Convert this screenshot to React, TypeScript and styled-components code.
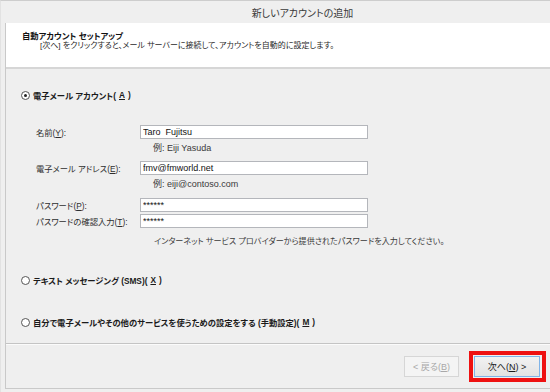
import React from 'react';
import styled, { createGlobalStyle } from 'styled-components';

const GlobalStyle = createGlobalStyle`
  html, body {
    margin: 0;
    padding: 0;
    background: #efefef;
  }
  body {
    font-family: "Liberation Sans", "Noto Sans CJK JP", sans-serif;
    font-feature-settings: "palt";
    font-size: 8.3px;
    color: #1e1e1e;
  }
`;

// ウィンドウ全体
const Window = styled.div`
  width: 550px;
  height: 392px;
  box-sizing: border-box;
  background: #efefef;
  border-top: 1px solid #cdcdcd;
  border-left: 1px solid #e2e2e2;
  display: flex;
  flex-direction: column;
  overflow: hidden;
`;

const TitleBar = styled.div`
  height: 22px;
  flex-shrink: 0;
  display: flex;
  align-items: center;
  justify-content: center;
  padding-left: 54px;
  font-size: 10px;
  color: #3a3a3a;
`;

const Panel = styled.div`
  margin-left: 4px;
  height: 365px;
  border-left: 1px solid #c9c9c9;
  border-bottom: 1px solid #c9c9c9;
  display: flex;
  flex-direction: column;
`;

// 上部の白いヘッダー
const Header = styled.div`
  height: 46px;
  flex-shrink: 0;
  box-sizing: border-box;
  background: #ffffff;
  border-bottom: 2px solid #d6d6d6;
  padding: 9px 0 0 16px;
`;

const HeaderTitle = styled.div`
  font-weight: bold;
  line-height: 9px;
  color: #111;
`;

const HeaderText = styled.div`
  font-size: 8px;
  line-height: 10px;
  padding-left: 18px;
  color: #2a2a2a;
`;

const Content = styled.div`
  flex: 1;
  display: flex;
  flex-direction: column;
  padding: 19px 0 0 15px;
  border-bottom: 1px solid #c4c4c4;
`;

const RadioRow = styled.label<{ $top?: number }>`
  display: flex;
  align-items: center;
  gap: 3px;
  height: 14px;
  margin-top: ${p => p.$top ?? 0}px;
  font-weight: bold;
  color: #1a1a1a;
`;

const RadioCircle = styled.span<{ $checked?: boolean }>`
  width: 7px;
  height: 7px;
  border-radius: 50%;
  border: 1px solid #555;
  background: #fff;
  display: flex;
  align-items: center;
  justify-content: center;

  &::after {
    content: '';
    width: 3px;
    height: 3px;
    border-radius: 50%;
    background: ${p => (p.$checked ? '#222' : 'transparent')};
  }
`;

const Form = styled.div`
  display: flex;
  flex-direction: column;
  padding-left: 15px;
  margin-top: 23px;
`;

const FieldRow = styled.div<{ $top?: number }>`
  display: grid;
  grid-template-columns: 104px 228px;
  align-items: center;
  height: 14px;
  margin-top: ${p => p.$top ?? 0}px;
`;

const FieldLabel = styled.span`
  color: #2e2e2e;
  white-space: nowrap;
`;

const TextBox = styled.input`
  box-sizing: border-box;
  width: 228px;
  height: 14px;
  border: 1px solid #b4b6bb;
  background: #fff;
  padding: 0 2px;
  font-family: "Liberation Sans", sans-serif;
  font-size: 9px;
  color: #111;
  white-space: pre;
  outline: none;
`;

const Note = styled.div`
  height: 12px;
  line-height: 12px;
  margin-top: 3px;
  padding-left: 117px;
  color: #3a3a3a;
  font-size: 9px;
`;

const Hint = styled.div`
  height: 12px;
  line-height: 12px;
  margin-top: 8px;
  padding-left: 118px;
  color: #3a3a3a;
  font-size: 8.1px;
`;

const Footer = styled.div`
  height: 43px;
  flex-shrink: 0;
  display: flex;
  align-items: center;
  justify-content: flex-end;
  gap: 10px;
  padding-right: 4px;
  border-top: 1px solid #fbfbfb;
`;

const Button = styled.button<{ $primary?: boolean }>`
  box-sizing: border-box;
  height: 21px;
  padding: 0;
  font-family: "Liberation Sans", "Noto Sans CJK JP", sans-serif;
  font-feature-settings: "palt";
  font-size: 9px;
  border: 1px solid ${p => (p.$primary ? '#7fb4e8' : '#d6d6d6')};
  background: ${p => (p.$primary ? 'linear-gradient(#f2f2f2, #e3e3e3)' : '#f4f4f4')};
  color: ${p => (p.$primary ? '#1a1a1a' : '#a8a8a8')};
`;

// 赤い強調枠
const Highlight = styled.div`
  border: 4px solid #ee1111;
  padding: 1px 2px 1px 1px;
  display: flex;
`;

const App: React.FC = () => {
  return (
    <>
      <GlobalStyle />
      <Window>
        <TitleBar>新しいアカウントの追加</TitleBar>
        <Panel>
          <Header>
            <HeaderTitle>自動アカウント セットアップ</HeaderTitle>
            <HeaderText>[次へ] をクリックすると、メール サーバーに接続して、アカウントを自動的に設定します。</HeaderText>
          </Header>

          <Content>
            <RadioRow>
              <RadioCircle $checked />
              電子メール アカウント(<u>A</u>)
            </RadioRow>

            <Form>
              <FieldRow>
                <FieldLabel>名前(<u>Y</u>):</FieldLabel>
                <TextBox readOnly value="Taro  Fujitsu" />
              </FieldRow>
              <Note>例: Eiji Yasuda</Note>

              <FieldRow $top={7}>
                <FieldLabel>電子メール アドレス(<u>E</u>):</FieldLabel>
                <TextBox readOnly value="fmv@fmworld.net" />
              </FieldRow>
              <Note>例: eiji@contoso.com</Note>

              <FieldRow $top={8}>
                <FieldLabel>パスワード(<u>P</u>):</FieldLabel>
                <TextBox readOnly value="******" />
              </FieldRow>
              <FieldRow $top={2}>
                <FieldLabel>パスワードの確認入力(<u>T</u>):</FieldLabel>
                <TextBox readOnly value="******" />
              </FieldRow>
              <Hint>インターネット サービス プロバイダーから提供されたパスワードを入力してください。</Hint>
            </Form>

            <RadioRow $top={25}>
              <RadioCircle />
              テキスト メッセージング (SMS)(<u>X</u>)
            </RadioRow>

            <RadioRow $top={28}>
              <RadioCircle />
              自分で電子メールやその他のサービスを使うための設定をする (手動設定)(<u>M</u>)
            </RadioRow>
          </Content>

          <Footer>
            <Button disabled style={{ width: 55 }}>&lt; 戻る(<u>B</u>)</Button>
            <Highlight>
              <Button $primary style={{ width: 66 }}>次へ(<u>N</u>) &gt;</Button>
            </Highlight>
          </Footer>
        </Panel>
      </Window>
    </>
  );
};

export default App;
